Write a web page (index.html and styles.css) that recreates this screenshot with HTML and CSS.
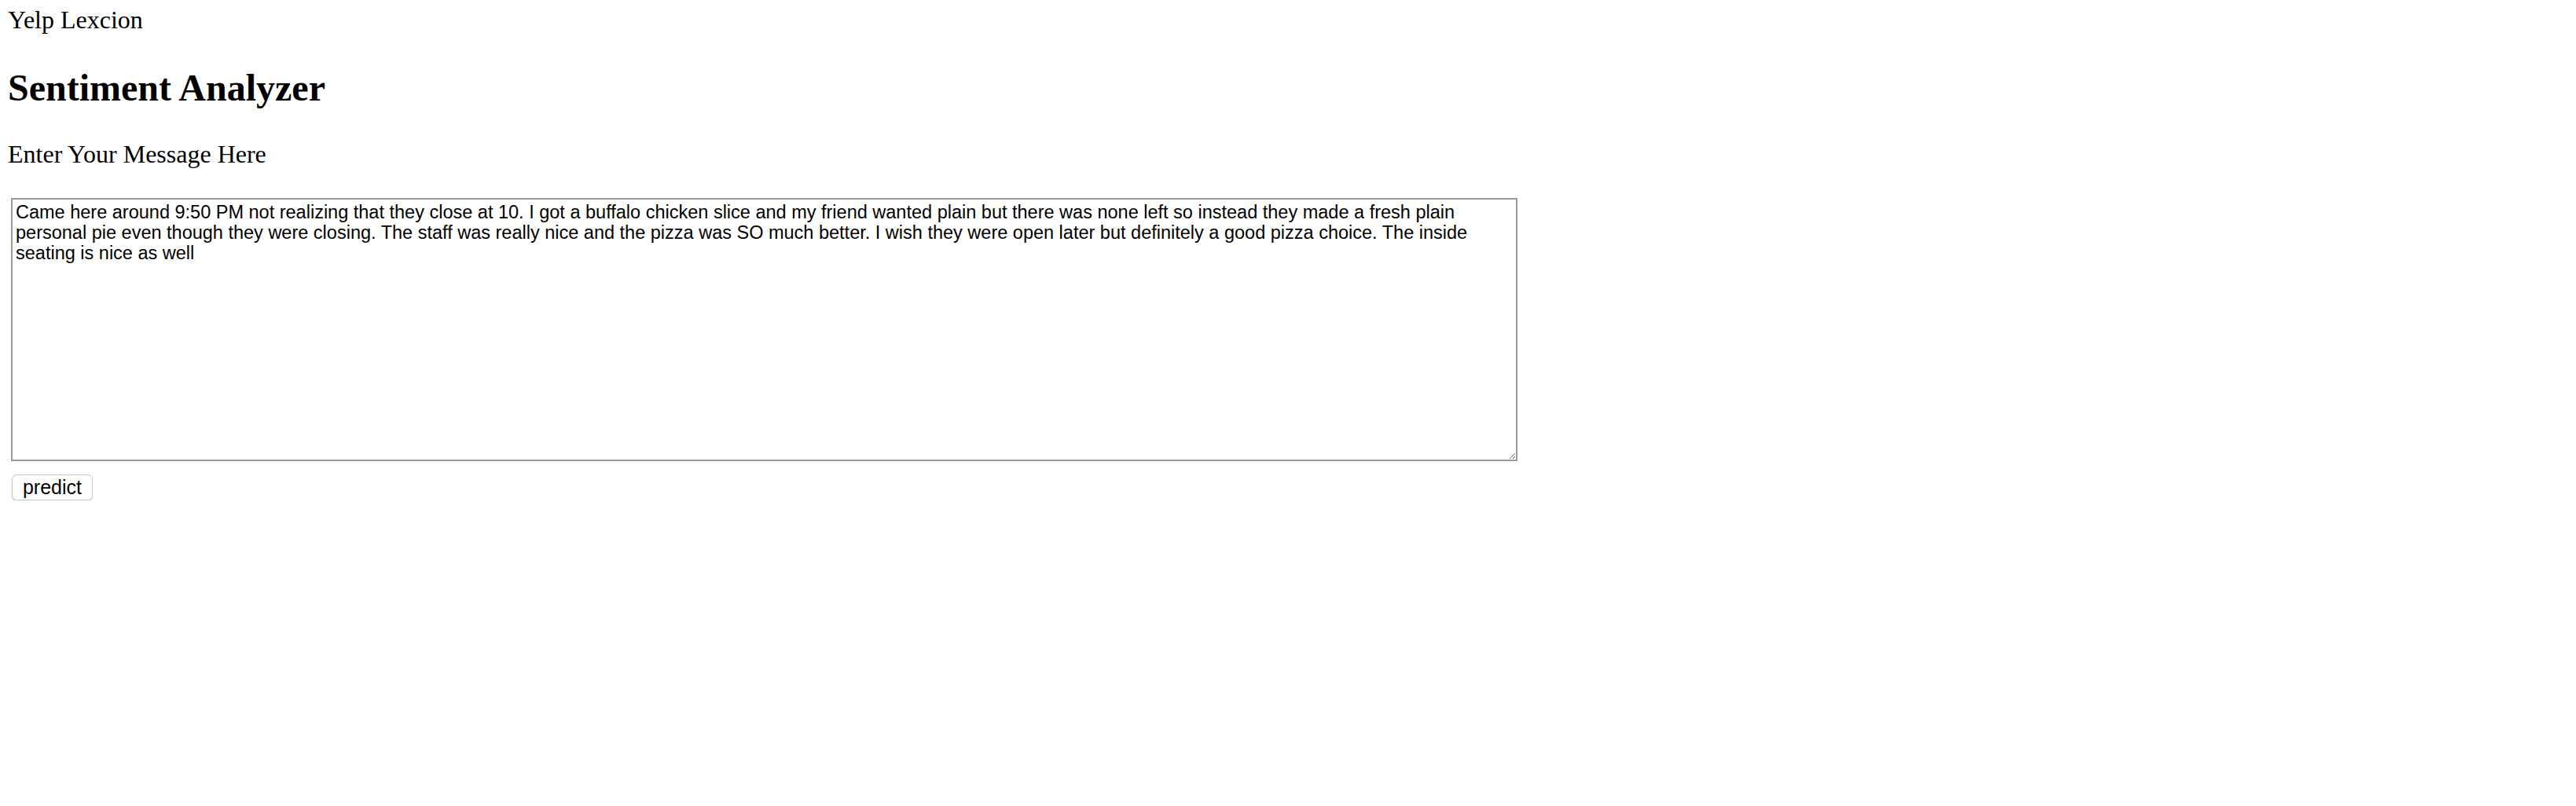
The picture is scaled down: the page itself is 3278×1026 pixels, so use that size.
FILE: index.html
```html
<!DOCTYPE html>
<html lang="en">
<head>
<meta charset="utf-8">
<title>Yelp Lexcion</title>
<link rel="stylesheet" href="styles.css">
</head>
<body>
<div class="brand">Yelp Lexcion</div>
<h2 class="title">Sentiment Analyzer</h2>
<p class="prompt">Enter Your Message Here</p>
<form class="form">
<textarea class="message">Came here around 9:50 PM not realizing that they close at 10. I got a buffalo chicken slice and my friend wanted plain but there was none left so instead they made a fresh plain personal pie even though they were closing. The staff was really nice and the pizza was SO much better. I wish they were open later but definitely a good pizza choice. The inside seating is nice as well</textarea>
<button type="button" class="predict">predict</button>
</form>
</body>
</html>
```
FILE: styles.css
```css
html, body {
  background: #fff;
}
body {
  margin: 0;
  padding: 7px 0 0 10px;
  font-family: "Liberation Serif", "Times New Roman", serif;
  font-size: 32px;
  color: #000;
}
.brand {
  line-height: 36px;
}
.title {
  margin: 42px 0 0;
  font-size: 48px;
  font-weight: bold;
  line-height: 54px;
}
.prompt {
  margin: 39px 0 0;
  line-height: 36px;
}
.form {
  margin: 38px 0 0 4px;
  display: flex;
  flex-direction: column;
  align-items: flex-start;
  gap: 17px;
}
.message {
  box-sizing: border-box;
  width: 1917px;
  height: 335px;
  margin: 0;
  border: 2px solid #999;
  padding: 3px 4px;
  font-family: "Liberation Sans", Arial, Helvetica, sans-serif;
  font-size: 23.5px;
  line-height: 26px;
  color: #000;
  background: #fff;
  resize: both;
  outline: none;
}
.predict {
  box-sizing: border-box;
  width: 103px;
  height: 33px;
  margin: 0 0 0 1px;
  padding: 0;
  border: 1px solid #c9c9c9;
  border-radius: 6px;
  background: #fff;
  box-shadow: 0 1px 1px rgba(0, 0, 0, 0.18);
  font-family: "Liberation Sans", Arial, Helvetica, sans-serif;
  font-size: 25px;
  line-height: 31px;
  color: #000;
}
```
